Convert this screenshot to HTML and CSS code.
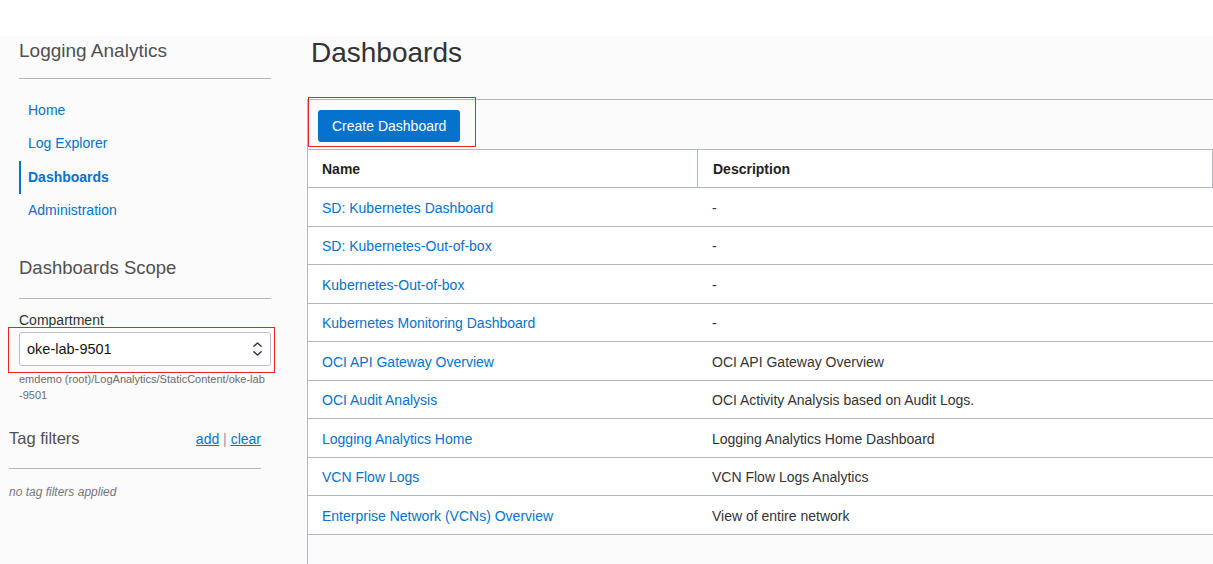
FILE: index.html
```html
<!DOCTYPE html>
<html lang="en">
<head>
<meta charset="utf-8">
<title>Dashboards - Logging Analytics</title>
<link rel="stylesheet" href="styles.css">
</head>
<body>
<div class="topband"></div>
<div class="app">
  <aside class="sidebar">
    <div class="side-title">Logging Analytics</div>
    <nav class="nav">
      <a class="nav-item" href="#">Home</a>
      <a class="nav-item" href="#">Log Explorer</a>
      <a class="nav-item active" href="#">Dashboards</a>
      <a class="nav-item" href="#">Administration</a>
    </nav>
    <div class="scope-title">Dashboards Scope</div>
    <div class="field">
      <div class="field-label">Compartment</div>
      <div class="select-wrap">
        <div class="select">
          <span class="select-value">oke-lab-9501</span>
          <svg class="chev" width="9" height="14" viewBox="0 0 9 14" aria-hidden="true">
            <polyline points="0.9,4.3 4.5,0.9 8.1,4.3" fill="none" stroke="#333" stroke-width="1.4" stroke-linecap="round" stroke-linejoin="round"/>
            <polyline points="0.9,9.7 4.5,13.1 8.1,9.7" fill="none" stroke="#333" stroke-width="1.4" stroke-linecap="round" stroke-linejoin="round"/>
          </svg>
        </div>
        <div class="annot annot-select"></div>
      </div>
      <div class="path">emdemo (root)/LogAnalytics/StaticContent/oke-lab-9501</div>
    </div>
    <div class="tags">
      <div class="tags-head">
        <span class="tags-title">Tag filters</span>
        <span class="tags-links"><a href="#">add</a> <span class="sep">|</span> <a href="#">clear</a></span>
      </div>
      <div class="tags-empty">no tag filters applied</div>
    </div>
  </aside>
  <main class="main">
    <h1 class="page-title">Dashboards</h1>
    <section class="panel">
      <div class="toolbar">
        <button class="btn" type="button">Create Dashboard</button>
        <div class="annot annot-btn"></div>
      </div>
      <table class="grid">
        <thead>
          <tr><th class="col-name">Name</th><th class="col-desc">Description</th></tr>
        </thead>
        <tbody>
          <tr><td><a href="#">SD: Kubernetes Dashboard</a></td><td class="desc">-</td></tr>
          <tr><td><a href="#">SD: Kubernetes-Out-of-box</a></td><td class="desc">-</td></tr>
          <tr><td><a href="#">Kubernetes-Out-of-box</a></td><td class="desc">-</td></tr>
          <tr><td><a href="#">Kubernetes Monitoring Dashboard</a></td><td class="desc">-</td></tr>
          <tr><td><a href="#">OCI API Gateway Overview</a></td><td class="desc">OCI API Gateway Overview</td></tr>
          <tr><td><a href="#">OCI Audit Analysis</a></td><td class="desc">OCI Activity Analysis based on Audit Logs.</td></tr>
          <tr><td><a href="#">Logging Analytics Home</a></td><td class="desc">Logging Analytics Home Dashboard</td></tr>
          <tr><td><a href="#">VCN Flow Logs</a></td><td class="desc">VCN Flow Logs Analytics</td></tr>
          <tr><td><a href="#">Enterprise Network (VCNs) Overview</a></td><td class="desc">View of entire network</td></tr>
        </tbody>
      </table>
    </section>
  </main>
</div>
</body>
</html>
```

FILE: styles.css
```css
* { box-sizing: border-box; }

html, body {
  margin: 0;
  padding: 0;
  background: #ffffff;
  font-family: "Liberation Sans", Arial, Helvetica, sans-serif;
  color: #333333;
}

.topband {
  height: 36px;
  background: #ffffff;
}

.app {
  display: flex;
  height: 528px;
  background: #fbfbfb;
}

/* ---------- sidebar ---------- */
.sidebar {
  width: 307px;
  flex: none;
  padding: 3px 36px 0 19px;
}

.side-title {
  font-size: 19px;
  line-height: 24px;
  color: #505050;
  padding-bottom: 15px;
  border-bottom: 1px solid #b1b7be;
}

.nav {
  display: flex;
  flex-direction: column;
  margin-top: 15px;
}

.nav-item {
  height: 33.25px;
  line-height: 33.25px;
  font-size: 14px;
  color: #0572ce;
  text-decoration: none;
  padding-left: 7px;
  border-left: 2px solid transparent;
}

.nav-item.active {
  border-left-color: #0572ce;
  font-weight: bold;
}

.scope-title {
  margin-top: 28.5px;
  font-size: 18.5px;
  line-height: 24px;
  color: #505050;
  padding-bottom: 18.5px;
  border-bottom: 1px solid #b1b7be;
}

.field {
  margin-top: 12.5px;
}

.field-label {
  font-size: 14px;
  line-height: 17px;
  color: #333333;
}

.select-wrap {
  position: relative;
  margin-top: 3px;
}

.select {
  height: 34px;
  display: flex;
  align-items: center;
  justify-content: space-between;
  padding: 0 8px 0 7px;
  background: #ffffff;
  border: 1px solid #b7bec5;
  border-radius: 3px;
}

.select-value {
  font-size: 14.5px;
  color: #161513;
}

.chev {
  display: block;
}

.path {
  margin-top: 5.5px;
  width: 248px;
  font-size: 11px;
  line-height: 16px;
  color: #6b6b6b;
  word-break: break-all;
}

.tags {
  width: 252px;
  margin-left: -10px;
  margin-top: 25px;
}

.tags-head {
  display: flex;
  justify-content: space-between;
  align-items: baseline;
  height: 41px;
  line-height: 20px;
  border-bottom: 1px solid #b1b7be;
}

.tags-title {
  font-size: 16.5px;
  color: #505050;
}

.tags-links {
  font-size: 14px;
  color: #999999;
}

.tags-links a {
  color: #0572ce;
  text-decoration: underline;
}

.tags-empty {
  margin-top: 14.5px;
  font-size: 12px;
  line-height: 16px;
  font-style: italic;
  color: #777777;
}

/* ---------- annotation boxes ---------- */
.annot {
  position: absolute;
  border: 1px solid #e8261f;
  pointer-events: none;
}

.annot-select {
  left: -11px;
  top: -4.5px;
  width: 267px;
  height: 45.5px;
}

.annot-btn {
  left: 0;
  top: -3.5px;
  width: 168px;
  height: 50.5px;
}

/* ---------- main ---------- */
.main {
  flex: 1;
  display: flex;
  flex-direction: column;
  padding-top: 3px;
  min-width: 0;
}

.page-title {
  margin: 0 0 32px 4px;
  font-size: 28px;
  line-height: 28px;
  font-weight: normal;
  color: #333333;
}

.panel {
  flex: 1;
  border-top: 1px solid #b1b7be;
  border-left: 1px solid #b1b7be;
}

.toolbar {
  position: relative;
  padding: 10px 10px 7px;
}

.btn {
  height: 32px;
  padding: 0 14px;
  border: none;
  border-radius: 3px;
  background: #0572ce;
  color: #ffffff;
  font-family: inherit;
  font-size: 14px;
  display: block;
}

.grid {
  width: 100%;
  table-layout: fixed;
  border-collapse: separate;
  border-spacing: 0;
  border-top: 1px solid #b1b7be;
  font-size: 14px;
}

.grid th,
.grid td {
  padding: 0 14px;
  text-align: left;
  background: #ffffff;
  border-bottom: 1px solid #b1b7be;
  white-space: nowrap;
  overflow: hidden;
}

.grid th {
  padding-top: 1px;
  line-height: 36px;
  font-weight: bold;
  color: #1f1f1f;
}

.grid th.col-name {
  width: 389px;
}

.grid th.col-desc {
  padding-left: 15px;
  border-left: 1px solid #b1b7be;
  border-right: 1px solid #b1b7be;
}

.grid td {
  padding-top: 2.5px;
  line-height: 35px;
  color: #333333;
}

.grid td.desc {
  padding-left: 15px;
}

.grid td a {
  color: #0572ce;
  text-decoration: none;
}
```
